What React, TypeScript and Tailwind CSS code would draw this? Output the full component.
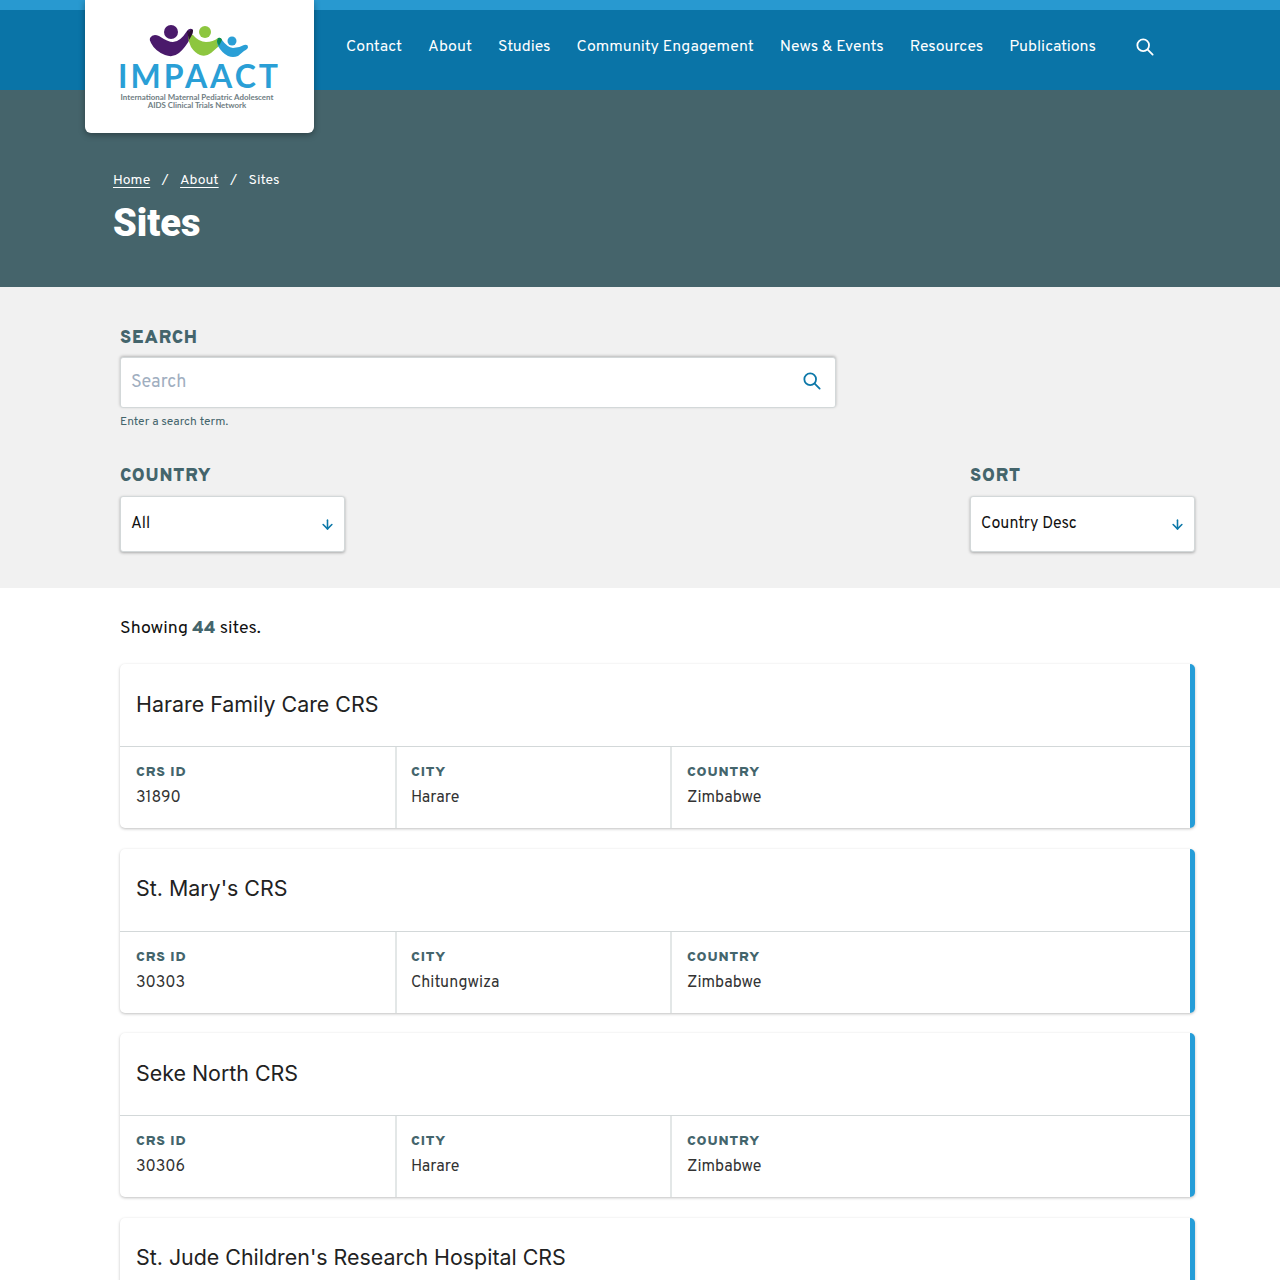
import { ArrowDown } from 'lucide-react';

const font = "font-['Overpass','Roboto','Liberation_Sans',sans-serif]";

const navItems = ['Contact', 'About', 'Studies', 'Community Engagement', 'News & Events', 'Resources', 'Publications'];

const sites = [
    { name: 'Harare Family Care CRS', id: '31890', city: 'Harare', country: 'Zimbabwe' },
    { name: "St. Mary's CRS", id: '30303', city: 'Chitungwiza', country: 'Zimbabwe' },
    { name: 'Seke North CRS', id: '30306', city: 'Harare', country: 'Zimbabwe' },
    { name: "St. Jude Children's Research Hospital CRS", id: '', city: '', country: '' },
];

function SearchGlyph({ className }: { className: string }) {
    return (
        <svg viewBox="0 0 20 20" fill="none" stroke="currentColor" strokeWidth="2" strokeLinecap="round" className={className}>
            <circle cx="8" cy="8" r="6.5" />
            <line x1="13" y1="13" x2="18.5" y2="18.5" />
        </svg>
    );
}

function Logo() {
    return (
        <div className="flex flex-col items-center pt-[25px]">
            {/* viewBox is in page pixels */}
            <svg width="104" height="34" viewBox="145 25 104 34">
                <circle cx="168" cy="32" r="7" fill="#4a1a6b" />
                <path d="M147 38 Q150 33 156 36 Q165 42 170 42 Q177 42 184 31 Q187 27 190 30 Q190 34 187 39 Q182 48 176 53 Q170 58 162 55 Q152 51 148 43 Q146 40 147 38Z" fill="#4a1a6b" />
                <circle cx="202" cy="32" r="6" fill="#8dc63f" />
                <path d="M185 36 Q187 33 190 35 Q196 42 203 42 Q210 42 215 38 Q218 37 219 40 Q219 43 216 46 L208 53 Q203 57 197 55 Q192 53 188 47 Q185 41 185 36Z" fill="#8dc63f" />
                <circle cx="229" cy="41" r="4.5" fill="#2a9fd6" />
                <path d="M214 41 Q216 37 219 40 Q224 47 230 48 Q236 48 241 45 Q245 44 245 47 Q245 49 241 51 L235 56 Q230 58 225 56 Q219 53 215 46 Q214 43 214 41Z" fill="#2a9fd6" />
                <path d="M185 35 Q187 30 184 31 L186 40 Q190 34 190 30 Q188 28 185 35Z" fill="#2a1030" />
                <path d="M215 38 Q218 37 219 40 L216 46 Q214 43 214 41Z" fill="#0b8a50" />
            </svg>
            <div className="text-[32px] leading-[24px] font-bold text-[#2a9fd6] font-['Lato',sans-serif] tracking-[3px] mt-[5px]">IMPAACT</div>
            <div className="text-[7.9px] leading-[8px] font-bold text-[#6f7d83] font-['Lato',sans-serif] text-center whitespace-nowrap mt-[5px] mr-[5px]">
                International Maternal Pediatric Adolescent
                <br />
                AIDS Clinical Trials Network
            </div>
        </div>
    );
}

function Cell({ label, value, className }: { label: string; value: string; className: string }) {
    return (
        <div className={`pt-[16px] ${className}`}>
            <div className="text-sm leading-5 font-black tracking-[0.9px] text-[#44656c]">{label}</div>
            <div className="text-base leading-[30px] text-[#333]">{value}</div>
        </div>
    );
}

function SiteCard({ site }: { site: (typeof sites)[number] }) {
    return (
        <div className="bg-white rounded-[5px] border-r-[5px] border-[#259dd8] shadow-[0_1px_3px_rgba(0,0,0,0.25)] mb-[20.5px]">
            <div className="h-[83px] flex items-center px-4 pb-[2px] text-[21.4px] text-[#222] font-['Inter',sans-serif] border-b border-[#d3d8d9]">{site.name}</div>
            {site.id && (
                <div className="flex h-[81px]">
                    <Cell label="CRS ID" value={site.id} className="w-[277px] pl-4 border-r-2 border-[#e3e7e7]" />
                    <Cell label="CITY" value={site.city} className="w-[275px] pl-[14px] border-r-2 border-[#e3e7e7]" />
                    <Cell label="COUNTRY" value={site.country} className="flex-1 pl-[15px]" />
                </div>
            )}
        </div>
    );
}

function SelectBox({ label, value }: { label: string; value: string }) {
    return (
        <div className="w-[225px]">
            <div className="text-lg leading-6 font-black tracking-[0.8px] text-[#44656c] mb-[7px]">{label}</div>
            <div className="h-[56px] bg-white rounded-[3px] border border-[#d3d8d9] shadow-[0_1px_3px_rgba(0,0,0,0.3)] flex items-center justify-between pl-[10px] pr-[9px] text-base text-[#111]">
                <span className="pb-[1px]">{value}</span>
                <ArrowDown strokeWidth={2.5} className="w-[15px] h-[15px] text-[#0b77a8]" />
            </div>
        </div>
    );
}

export default function App() {
    return (
        <div className={`h-[1280px] overflow-hidden bg-white ${font}`}>
            <div className="h-[10px] bg-[#2899d0]" />
            <header className="h-[80px] bg-[#0a74a7] flex items-center relative pl-[333px]">
                <div className="absolute left-[85px] -top-[10px] w-[229px] h-[133px] bg-white rounded-b-[6px] shadow-[0_2px_6px_rgba(0,0,0,0.35)] z-10">
                    <Logo />
                </div>
                <nav className="flex items-center text-[15.9px] text-white pb-[5px]">
                    {navItems.map((item) => (
                        <span key={item} className="px-[13px]">{item}</span>
                    ))}
                </nav>
                <SearchGlyph className="w-[18px] h-[18px] text-white ml-[27px] -mt-[6px]" />
            </header>
            <section className="h-[197px] bg-[#45646b] pl-[113px] pt-[81px] text-white">
                <div className="flex gap-[11.5px] text-sm leading-5">
                    <span className="underline underline-offset-[3px]">Home</span>
                    <span>/</span>
                    <span className="underline underline-offset-[3px]">About</span>
                    <span>/</span>
                    <span>Sites</span>
                </div>
                <h1 className="text-[38px] leading-[44px] font-black font-['Roboto',sans-serif] mt-[10px]">Sites</h1>
            </section>
            <section className="h-[301px] bg-[#f1f1f1] px-[120px] pt-[40px]">
                <div className="text-lg leading-6 font-black tracking-[0.8px] text-[#44656c] mb-[6px]">SEARCH</div>
                <div className="w-[716px] h-[51px] bg-white rounded-[3px] border border-[#d3d8d9] shadow-[0_-1px_3px_rgba(0,0,0,0.25)] flex items-center justify-between pl-[10px] pr-[14px] text-lg text-[#a0aec0]">
                    Search
                    <SearchGlyph className="w-[18px] h-[18px] text-[#0b77a8] -mt-[4px]" />
                </div>
                <div className="text-xs leading-4 mt-[6px] text-[#44656c]">Enter a search term.</div>
                <div className="flex justify-between w-[1075px] mt-[35px]">
                    <SelectBox label="COUNTRY" value="All" />
                    <SelectBox label="SORT" value="Country Desc" />
                </div>
            </section>
            <main className="pl-[120px] w-[1195px] box-border">
                <p className="text-[17.75px] leading-7 pt-[27px] pb-[21px] text-[#111]">
                    Showing <strong className="font-black text-[#44656c]">44</strong> sites.
                </p>
                {sites.map((site) => (
                    <SiteCard key={site.name} site={site} />
                ))}
            </main>
        </div>
    );
}
